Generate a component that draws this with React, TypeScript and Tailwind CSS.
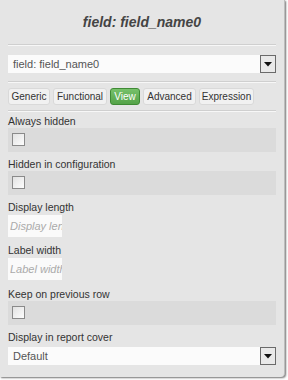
import React from "react";

const font = { fontFamily: '"Liberation Sans", Arial, sans-serif' };

function Line({ className = "" }: { className?: string }) {
  return (
    <div className={`h-[2px] ${className}`}>
      <div className="h-px bg-[#cfcfcf]" />
      <div className="h-px bg-[#f7f7f7]" />
    </div>
  );
}

function Select({ value, className = "" }: { value: string; className?: string }) {
  return (
    <div className={`flex h-[18px] ${className}`}>
      <div className="flex flex-1 items-center bg-[#fbfbfb] pl-[5px] text-[11px] text-[#555]">{value}</div>
      <div className="flex w-[16px] items-center justify-center border border-[#6a6a6a] bg-[#e9e9e9]">
        <svg width="8" height="5" viewBox="0 0 8 5">
          <path d="M0 0h8L4 4.5z" fill="#111" />
        </svg>
      </div>
    </div>
  );
}

function Label({ text, className = "" }: { text: string; className?: string }) {
  return <div className={`h-[13px] text-[10.5px] leading-[13px] text-[#333] ${className}`}>{text}</div>;
}

function CheckRow({ className = "" }: { className?: string }) {
  return (
    <div className={`h-[24px] bg-[#dbdbdb] pl-[4px] pt-[5px] ${className}`}>
      <div className="h-[13px] w-[13px] border border-[#8a8a8a] bg-gradient-to-br from-[#e2e2e2] to-[#fdfdfd]" />
    </div>
  );
}

function TextInput({ placeholder, className = "" }: { placeholder: string; className?: string }) {
  return (
    <input
      readOnly
      placeholder={placeholder}
      className={`block h-[22px] w-[54px] bg-[#fafafa] pl-[2px] text-[11px] italic outline-none placeholder:text-[#aaa] ${className}`}
      style={font}
    />
  );
}

const tabs = [
  { label: "Generic", w: "w-[42px]" },
  { label: "Functional", w: "w-[54px]" },
  { label: "View", w: "w-[30px]", active: true },
  { label: "Advanced", w: "w-[53px]" },
  { label: "Expression", w: "w-[55px]" },
];

export default function App() {
  return (
    <div className="h-[380px] w-[288px] bg-white" style={font}>
      <div className="h-[377px] w-[285px] rounded-br-[4px] border-r border-[#bdbdbd] bg-[#e5e5e5] px-2 shadow-[1px_1px_2px_rgba(0,0,0,0.55)]">
        <div className="flex h-[44px] items-center justify-center pt-[1px] text-[14px] font-bold italic text-[#444]">
          field: field_name0
        </div>
        <Line />
        <Select value="field: field_name0" className="mt-[9px]" />
        <Line className="mt-[8px]" />
        <div className="mt-[5px] flex h-[17px] gap-[3px]">
          {tabs.map((t) => (
            <div
              key={t.label}
              className={`flex ${t.w} items-center justify-center rounded-[3px] border text-[10px] ${
                t.active
                  ? "border-[#3f8a35] bg-gradient-to-b from-[#77c16a] to-[#55a349] text-white"
                  : "border-[#d9d9d9] bg-[#f1f1f1] text-[#333]"
              }`}
            >
              {t.label}
            </div>
          ))}
        </div>
        <Line className="mt-[5px]" />
        <Label text="Always hidden" className="mt-[3px]" />
        <CheckRow />
        <Label text="Hidden in configuration" className="mt-[6px]" />
        <CheckRow />
        <Label text="Display length" className="mt-[6px]" />
        <TextInput placeholder="Display length" className="mt-[1px]" />
        <Label text="Label width" className="mt-[7px]" />
        <TextInput placeholder="Label width" className="mt-[1px]" />
        <Label text="Keep on previous row" className="mt-[8px]" />
        <CheckRow />
        <Label text="Display in report cover" className="mt-[6px]" />
        <Select value="Default" className="mt-[3px]" />
      </div>
    </div>
  );
}
